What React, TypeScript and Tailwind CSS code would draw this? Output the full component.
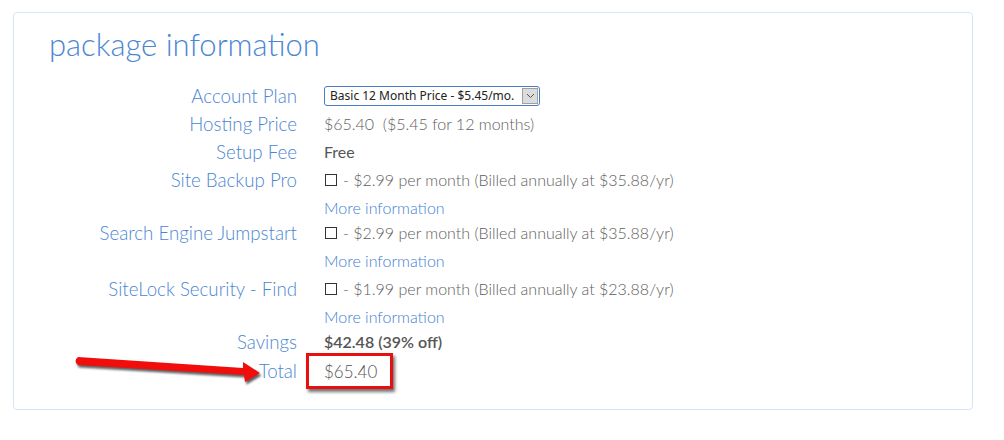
import { ReactNode } from "react";

// Hosting checkout – "package information" summary card.

const LABEL = "text-[18.7px] font-light text-[#4a86d2] text-right leading-none";
const VALUE = "text-[16px] font-light text-[#5e5e5e] leading-none";

function Row({ label, h = "h-[28px]", children }: { label: string; h?: string; children: ReactNode }) {
  return (
    <>
      <div className={`${h} flex items-center justify-end ${LABEL}`}>{label}</div>
      <div className={`${h} flex items-center`}>{children}</div>
    </>
  );
}

function Addon({ label, price, yearly, tail = "h-[25px]" }: { label: string; price: string; yearly: string; tail?: string }) {
  return (
    <>
      <Row label={label}>
        <span className="w-[12px] h-[12px] border border-[#333] bg-white mr-[6px] ml-px" />
        <span className={VALUE}>
          - {price} per month (Billed annually at {yearly}/yr)
        </span>
      </Row>
      <div className={tail} />
      <div className={`${tail} pt-[6px] text-[16px] font-light leading-none text-[#3f80d4]`}>More information</div>
    </>
  );
}

function Arrow() {
  return (
    <svg className="absolute left-0 top-0 pointer-events-none" width="300" height="420" viewBox="0 0 300 420">
      <defs>
        <filter id="sh" x="-10%" y="-50%" width="120%" height="200%">
          <feGaussianBlur stdDeviation="1.2" />
        </filter>
      </defs>
      <path
        d="M78 357 L243 368 L243 362 L260 373 L245 382 L244 375 L78 365 Q73 361 78 357 Z"
        fill="#2a2a2a"
        opacity="0.75"
        transform="translate(1.5 2.5)"
        filter="url(#sh)"
      />
      <path d="M78 357 L243 368 L243 362 L260 373 L245 382 L244 375 L78 365 Q73 361 78 357 Z" fill="#f20d0d" />
    </svg>
  );
}

export default function App() {
  return (
    <div className="relative w-[1004px] h-[440px] bg-white pt-[12px] pl-[13px]" style={{ fontFamily: "Lato, 'Open Sans', sans-serif" }}>
      <div className="w-[960px] h-[398px] border border-[#d5e5f5] rounded-[4px] pt-[13px]">
        <h1 className="ml-[35px] text-[31px] font-light leading-[36px] text-[#4a86d2] mb-[20px]">package information</h1>

        <div className="grid grid-cols-[283px_1fr] gap-x-[27px]">
          <Row label="Account Plan">
            <div
              className="flex items-center w-[216px] h-[20px] border border-[#4a7cc7] rounded-[3px] pl-[5px] text-[12px] text-[#222] leading-none"
              style={{ fontFamily: "'Noto Sans', 'DejaVu Sans', sans-serif" }}
            >
              <span className="flex-1 whitespace-nowrap">Basic 12 Month Price - $5.45/mo.</span>
              <span className="w-[16px] h-[16px] mr-px border border-[#a0a0a0] bg-[#dcdcdc] flex items-center justify-center">
                <svg width="9" height="6" viewBox="0 0 9 6">
                  <path d="M1 1 L4.5 4.5 L8 1" fill="none" stroke="#555" strokeWidth="1" />
                </svg>
              </span>
            </div>
          </Row>
          <Row label="Hosting Price">
            <span className={VALUE}>$65.40&nbsp;&nbsp;($5.45 for 12 months)</span>
          </Row>
          <Row label="Setup Fee">
            <span className="text-[16px] text-[#555] leading-none">Free</span>
          </Row>
          <Addon label="Site Backup Pro" price="$2.99" yearly="$35.88" />
          <Addon label="Search Engine Jumpstart" price="$2.99" yearly="$35.88" tail="h-[28px]" />
          <Addon label="SiteLock Security - Find" price="$1.99" yearly="$23.88" />
          <Row label="Savings">
            <span className="text-[16px] font-semibold text-[#555] leading-none">$42.48 (39% off)</span>
          </Row>
          <Row label="Total" h="h-[30px]">
            <div className="-ml-[18px] w-[87px] h-[36px] border-[3px] border-[#e8100f] flex items-center pl-[15px] shadow-[2px_3px_3px_rgba(0,0,0,0.55)]">
              <span className="text-[17px] font-light text-[#555] leading-none">$65.40</span>
            </div>
          </Row>
        </div>
      </div>
      <Arrow />
    </div>
  );
}
